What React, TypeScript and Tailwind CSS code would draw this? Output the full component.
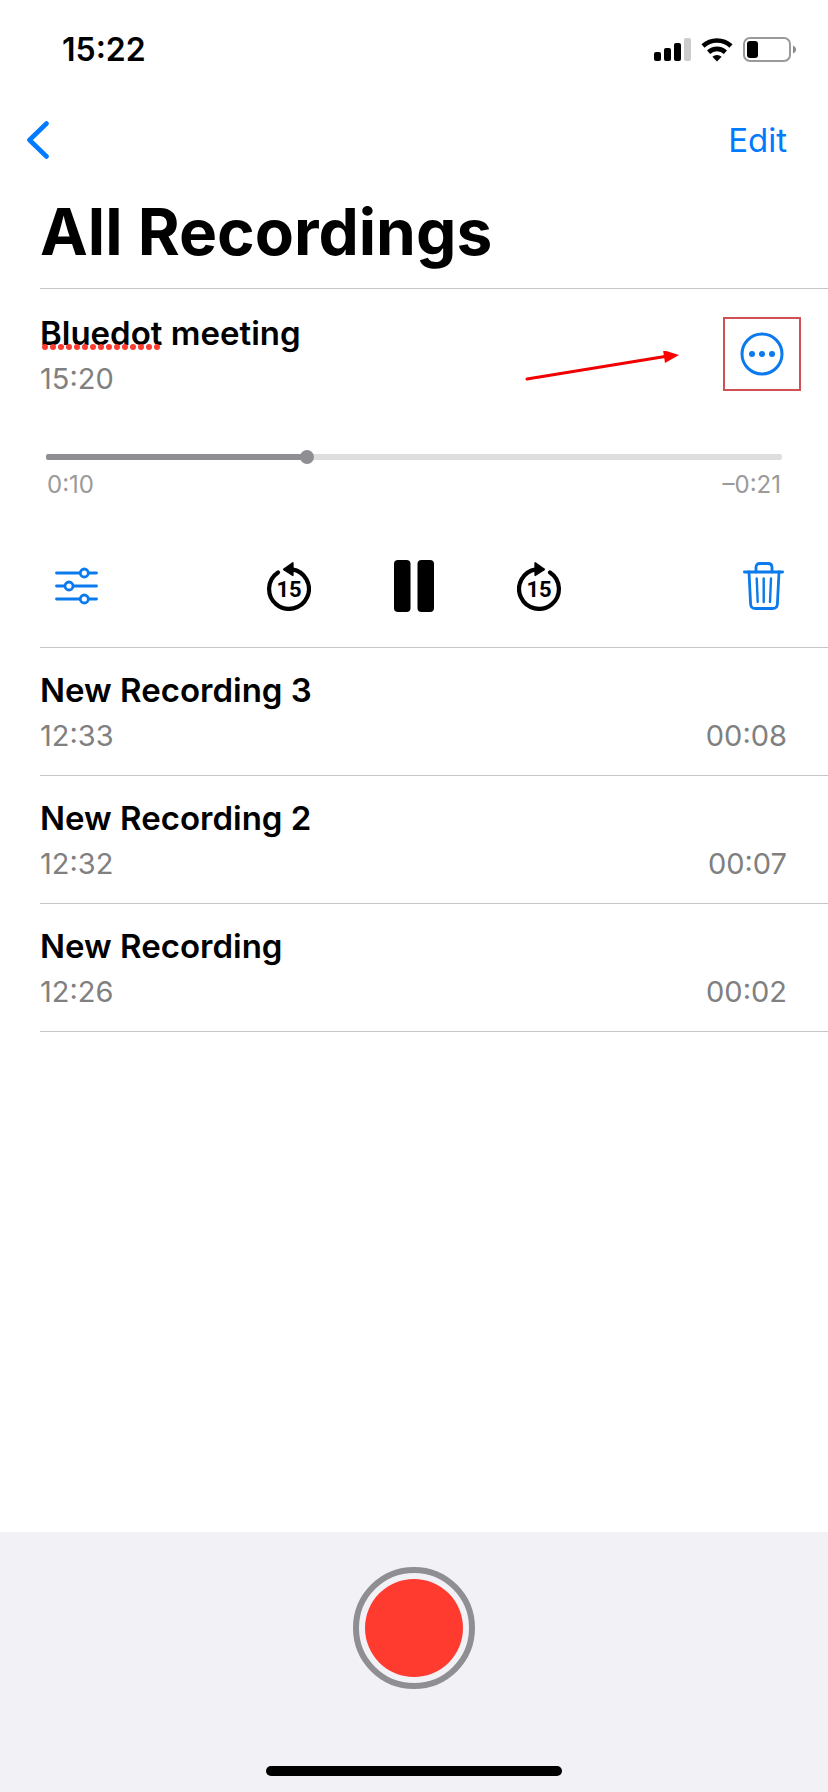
import { useState } from "react"

const recordings = [
  { title: "New Recording 3", time: "12:33", duration: "00:08" },
  { title: "New Recording 2", time: "12:32", duration: "00:07" },
  { title: "New Recording", time: "12:26", duration: "00:02" },
]

function StatusIcons() {
  return (
    <div className="flex items-center gap-[10px]">
      {/* Signal */}
      <svg width="37" height="24" viewBox="0 0 37 24">
        <rect x="0" y="14" width="7" height="9" rx="2" />
        <rect x="10" y="10" width="7" height="13" rx="2" />
        <rect x="20" y="5" width="7" height="18" rx="2" />
        <rect x="30" y="0" width="7" height="23" rx="2" fill="#cccccc" />
      </svg>
      {/* Wifi */}
      <svg width="32" height="24" viewBox="0 0 32 24">
        <path d="M2 8 A20.5 20.5 0 0 1 30 8" fill="none" stroke="#000" strokeWidth="4.6" />
        <path d="M7.6 14.2 A12.3 12.3 0 0 1 24.4 14.2" fill="none" stroke="#000" strokeWidth="4.6" />
        <path d="M16 23.5 L11.4 18.8 A6.6 6.6 0 0 1 20.6 18.8 Z" />
      </svg>
      {/* Battery */}
      <svg width="53" height="26" viewBox="0 0 53 26">
        <rect x="1" y="1" width="46" height="23" rx="6" fill="none" stroke="#999999" strokeWidth="2" />
        <rect x="4" y="4" width="11" height="17" rx="3" />
        <path d="M50 8.5 C54 10 54 15 50 16.5 Z" fill="#8a8a8a" />
      </svg>
    </div>
  )
}

function SkipIcon({ forward = false }: { forward?: boolean }) {
  return (
    <svg width="44" height="50" viewBox="0 0 44 50">
      <g transform={forward ? "translate(44 0) scale(-1 1)" : undefined}>
        <path d="M11 11.400 A19.900 19.900 0 1 0 25 8.300" fill="none" stroke="#000" strokeWidth="4.2" strokeLinecap="round" />
        <path d="M16.500 7.500 L25 1.400 Q26.600 0.500 26.600 2.200 V14 Q26.600 15.800 25 14.800 L16.500 9.300 Q15.300 8.400 16.500 7.500 Z" />
      </g>
      <text x="22" y="36" textAnchor="middle" fontSize="22" fontWeight="700" fontFamily="Roboto, sans-serif">
        15
      </text>
    </svg>
  )
}

export default function App() {
  const [position, setPosition] = useState(352)

  const track = {
    background: `linear-gradient(to right, #8e8e93 ${position / 10}%, #dedede ${position / 10}%)`,
  }

  return (
    <div className="min-h-screen flex flex-col bg-white text-black font-[Inter,sans-serif]">
      <header>
        <div className="h-[100px] flex items-center justify-between pl-[62px] pr-8">
          <span className="text-[32px] leading-10 font-semibold">15:22</span>
          <StatusIcons />
        </div>

        <nav className="h-20 flex items-center justify-between pl-[27px] pr-[41px]">
          <button aria-label="Back">
            <svg width="22" height="38" viewBox="0 0 22 38" fill="none" stroke="#007aff" strokeWidth="4.6" strokeLinecap="round" strokeLinejoin="round">
              <path d="M19.5 2.5 L2.5 19 L19.5 35.5" />
            </svg>
          </button>
          <button className="text-[33px] leading-10 text-[#007aff]">Edit</button>
        </nav>

        <h1 className="pl-10 pt-3 pb-4 text-[64px] leading-[80px] font-bold">All Recordings</h1>
      </header>

      <main className="pl-10">
        {/* Open recording with player */}
        <section className="border-y border-[#c6c6c8] pb-[35px]">
          <div className="flex items-start justify-between pt-6 pr-[27px]">
            <div>
              <h2 className="text-[33px] leading-10 font-semibold">
                <span className="relative">
                  Bluedot
                  <svg className="absolute left-[2px] bottom-[3px]" width="120" height="6" aria-hidden="true">
                    <line x1="3" y1="3" x2="118" y2="3" stroke="#ff3b30" strokeWidth="6" strokeLinecap="round" strokeDasharray="0 8" />
                  </svg>
                </span>{" "}
                meeting
              </h2>
              <p className="mt-2 text-[29px] leading-9 text-[#808080]">15:20</p>
            </div>
            <div className="flex items-center gap-[43px] pt-1">
              <svg className="mt-6" width="155" height="30" viewBox="0 0 155 30" aria-hidden="true">
                <path d="M2 28 L140 5.5" stroke="#f00000" strokeWidth="3" strokeLinecap="round" />
                <path d="M138 -1 L154 4 L140 12 Z" fill="#ff0000" />
              </svg>
              <button aria-label="More" className="w-[78px] h-[74px] flex items-center justify-center border-2 border-[#d05054]">
                <svg width="44" height="44" viewBox="0 0 44 44" fill="#0a7aec">
                  <circle cx="22" cy="22" r="20" fill="none" stroke="#0a7aec" strokeWidth="3" />
                  <circle cx="12" cy="22" r="3" />
                  <circle cx="22" cy="22" r="3" />
                  <circle cx="32" cy="22" r="3" />
                </svg>
              </button>
            </div>
          </div>

          <div className="mt-[57px] pl-[6px] pr-[46px]">
            <input
              type="range"
              min="0"
              max="1000"
              value={position}
              onChange={(e) => setPosition(Number(e.target.value))}
              aria-label="Playback position"
              style={track}
              className="block w-full h-[6px] rounded-xs appearance-none [&::-webkit-slider-thumb]:appearance-none [&::-webkit-slider-thumb]:size-[14px] [&::-webkit-slider-thumb]:rounded-full [&::-webkit-slider-thumb]:bg-[#8e8e93]"
            />
            <div className="mt-[11px] flex justify-between px-[1px] text-[24px] leading-7 text-[#9a9a9a]">
              <span>0:10</span>
              <span>–0:21</span>
            </div>
          </div>

          <div className="mt-[61px] grid grid-cols-[1fr_auto_1fr] items-center pl-1 pr-11">
            <button aria-label="Options" className="justify-self-start pl-[11px]">
              <svg width="43" height="38" viewBox="0 0 43 38" fill="#fff" stroke="#0a7aec" strokeWidth="2.8" strokeLinecap="round">
                <path d="M1.5 6 H41.5 M1.5 19 H41.5 M1.5 32 H41.5" />
                <circle cx="29.3" cy="6" r="4" />
                <circle cx="14" cy="19" r="4" />
                <circle cx="29.3" cy="32" r="4" />
              </svg>
            </button>
            <div className="flex items-center gap-[83px]">
              <button aria-label="Back 15 seconds">
                <SkipIcon />
              </button>
              <button aria-label="Pause">
                <svg width="40" height="52" viewBox="0 0 40 52">
                  <rect x="0" y="0" width="16.5" height="52" rx="4" />
                  <rect x="23.5" y="0" width="16.5" height="52" rx="4" />
                </svg>
              </button>
              <button aria-label="Forward 15 seconds">
                <SkipIcon forward />
              </button>
            </div>
            <button aria-label="Delete" className="justify-self-end">
              <svg width="41" height="48" viewBox="0 0 41 48" fill="none" stroke="#0a7aec" strokeWidth="2.8" strokeLinecap="round" strokeLinejoin="round">
                <path d="M1.4 10 H39.6" />
                <path d="M13 10 V5.5 Q13 1.5 17 1.5 H25 Q29 1.5 29 5.5 V10" />
                <path d="M6 10 L7.6 42 Q7.9 46.5 12.4 46.5 H29.6 Q34.1 46.5 34.4 42 L36 10" />
                <path d="M13.7 16.5 L14.7 40 M20.7 16.5 V40 M28 16.5 L27 40" strokeWidth="2.4" />
              </svg>
            </button>
          </div>
        </section>

        <ul>
          {recordings.map((rec) => (
            <li key={rec.title} className="border-b border-[#c6c6c8] pt-[22px] pb-[21px] pr-[41px]">
              <h2 className="text-[33px] leading-10 font-semibold">{rec.title}</h2>
              <div className="mt-2 flex justify-between text-[29px] leading-9 text-[#808080]">
                <span>{rec.time}</span>
                <span>{rec.duration}</span>
              </div>
            </li>
          ))}
        </ul>
      </main>

      <footer className="mt-auto flex flex-col items-center bg-[#f1f1f6] pt-[35px] pb-4">
        <button aria-label="Record" className="size-[122px] rounded-full border-6 border-[#8e8e93] p-[6px]">
          <span className="block size-full rounded-full bg-[#ff3b30]" />
        </button>
        <div className="mt-[77px] w-[296px] h-[10px] rounded-full bg-black" />
      </footer>
    </div>
  )
}
